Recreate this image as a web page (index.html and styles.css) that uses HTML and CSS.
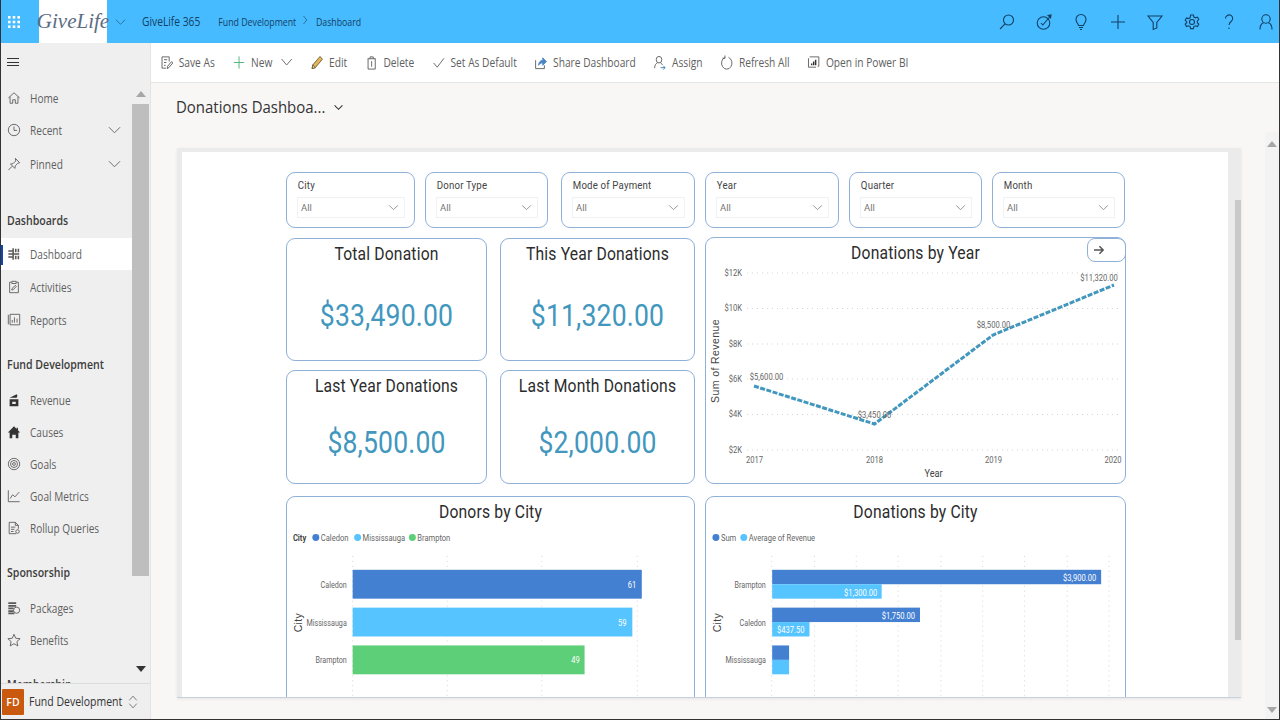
FILE: index.html
```html
<!DOCTYPE html>
<html lang="en">
<head>
<meta charset="utf-8">
<title>Donations Dashboard</title>
<link rel="stylesheet" href="styles.css">
</head>
<body>
<div class="app">
  <header class="topbar">
    <svg class="waffle" viewBox="0 0 14 14"><g fill="#fff"><rect x="1" y="1" width="2.6" height="2.6"/><rect x="5.7" y="1" width="2.6" height="2.6"/><rect x="10.4" y="1" width="2.6" height="2.6"/><rect x="1" y="5.7" width="2.6" height="2.6"/><rect x="5.7" y="5.7" width="2.6" height="2.6"/><rect x="10.4" y="5.7" width="2.6" height="2.6"/><rect x="1" y="10.4" width="2.6" height="2.6"/><rect x="5.7" y="10.4" width="2.6" height="2.6"/><rect x="10.4" y="10.4" width="2.6" height="2.6"/></g></svg>
    <div class="logo">GiveLife</div>
    <svg class="top-chev" viewBox="0 0 12 8"><path d="M1 1.5l5 5 5-5"/></svg>
    <div class="crumbs">
      <span class="app-name">GiveLife 365</span>
      <span class="crumb">Fund Development</span>
      <svg class="crumb-sep" viewBox="0 0 6 10"><path d="M1 1l4 4-4 4"/></svg>
      <span class="crumb">Dashboard</span>
    </div>
    <div class="top-icons">
      <svg viewBox="0 0 18 18"><circle cx="10.5" cy="7" r="5"/><path d="M7 10.8L2 16"/></svg>
      <svg viewBox="0 0 18 18"><circle cx="8.5" cy="10" r="6.3"/><path d="M6 10l1.8 2L15.5 3"/><path d="M12.5 2.5l3.5-.5-.5 3.5" fill="#123f63"/></svg>
      <svg viewBox="0 0 18 18"><path d="M6.5 12.5C6 10 4 9.5 4 6.5a5 5 0 0 1 10 0c0 3-2 3.5-2.5 6z"/><path d="M6.7 12.5h4.6M7 14.5h4M8 16.5h2"/></svg>
      <svg viewBox="0 0 18 18"><path d="M9 2v14M2 9h14"/></svg>
      <svg viewBox="0 0 18 18"><path d="M2 3h14l-5.2 6.5V15l-3.6 1.5v-7z"/></svg>
      <svg viewBox="0 0 18 18"><path d="M7.6 2h2.8l.5 2 1.6.8 2-.7 1.3 2.4-1.5 1.4v1.8l1.5 1.4-1.3 2.4-2-.7-1.6.8-.5 2H7.6l-.5-2-1.6-.8-2 .7-1.3-2.4 1.5-1.4V8.7L2.200 7.300l1.300-2.400 2 .7 1.600-.8z"/><circle cx="9" cy="9" r="2.500"/></svg>
      <svg viewBox="0 0 18 18"><path d="M5.500 5.500a3.600 3.600 0 1 1 5.600 3c-1.400 1-2 1.700-2 3.500"/><path d="M9 14.500v1.500"/></svg>
      <svg viewBox="0 0 18 18"><circle cx="9" cy="6" r="4.200"/><path d="M3 16.500c0-3.500 1.500-6 3.500-6.800M15 16.500c0-3.500-1.500-6-3.500-6.800"/></svg>
    </div>
  </header>

  <div class="body">
    <aside class="side">
      <div class="hamburger"><span></span><span></span><span></span></div>
      <div class="side-body">
        <nav class="nav">
          <a class="item"><svg class="ic" viewBox="0 0 16 16"><path d="M1.500 8L8 2l6.500 6M3.500 6.500V14h3v-4h3v4h3V6.500"/></svg><span class="lbl">Home</span></a>
          <a class="item"><svg class="ic" viewBox="0 0 16 16"><circle cx="8" cy="8" r="6.500"/><path d="M8 4v4.500h3.500"/></svg><span class="lbl">Recent</span><svg class="chev" viewBox="0 0 14 8"><path d="M1 1l6 6 6-6"/></svg></a>
          <a class="item gap-top"><svg class="ic" viewBox="0 0 16 16"><path d="M9.500 1.500l5 5-2 .5-3 3-.5 3L4 8l3-.5 3-3zM6 10.500L1.500 15"/></svg><span class="lbl">Pinned</span><svg class="chev" viewBox="0 0 14 8"><path d="M1 1l6 6 6-6"/></svg></a>
          <div class="group first"><span>Dashboards</span></div>
          <a class="item active"><svg class="ic" viewBox="0 0 16 16"><path d="M7 1.500v13M1.500 4.500H7M1.500 8H14M1.500 11.500H7M10 2v4M13 2v4M10 10v4M13 10v4" stroke-width="1.800"/></svg><span class="lbl">Dashboard</span></a>
          <a class="item tight"><svg class="ic" viewBox="0 0 16 16"><path d="M5 2.500H3v12h10v-12h-2M5.500 1.500h5v2.500h-5zM5.500 11.500L6 9.500l3.500-3.500 1.200 1.200L7.200 11z"/></svg><span class="lbl">Activities</span></a>
          <a class="item tight"><svg class="ic" viewBox="0 0 16 16"><path d="M3.500 1.500h11v12h-11zM1.500 2v11M6 11V8M8.500 11V5M11.500 11V6.500" /></svg><span class="lbl">Reports</span></a>
          <div class="group"><span>Fund Development</span></div>
          <a class="item"><svg class="ic solid" viewBox="0 0 16 16"><path d="M3 7h10v8H3zM6 10v2.500h4V10zM3 5.500l8-4 1 1.500-1 2.500z"/></svg><span class="lbl">Revenue</span></a>
          <a class="item"><svg class="ic solid" viewBox="0 0 16 16"><path d="M8 1.500l3 3V3h1.500v3L15 8.500h-2V15h-3v-4H6v4H3V8.500H1z"/></svg><span class="lbl">Causes</span></a>
          <a class="item"><svg class="ic" viewBox="0 0 16 16"><circle cx="8" cy="8" r="6.500"/><circle cx="8" cy="8" r="4"/><circle cx="8" cy="8" r="1.600"/></svg><span class="lbl">Goals</span></a>
          <a class="item"><svg class="ic" viewBox="0 0 16 16"><path d="M1.500 1.500v13h13M3.500 11l3-4.500 2.500 2.500 5-5.500"/></svg><span class="lbl">Goal Metrics</span></a>
          <a class="item"><svg class="ic" viewBox="0 0 16 16"><path d="M9.500 1.500h-7v13h8M9.500 1.500l3.500 3.500v4M9.500 1.500V5H13M4.500 7h5M4.500 9.500h4M4.500 12h3"/><circle cx="12" cy="12" r="2"/></svg><span class="lbl">Rollup Queries</span></a>
          <div class="group"><span>Sponsorship</span></div>
          <a class="item"><svg class="ic" viewBox="0 0 16 16"><path d="M1.500 2.500h9M1.500 5.500h9M1.500 8.500h6M1.500 11.500h6M1.500 14h7" stroke-width="2"/><circle cx="11" cy="10.500" r="3.500"/></svg><span class="lbl">Packages</span></a>
          <a class="item"><svg class="ic" viewBox="0 0 16 16"><path d="M8 1.500l2 4.500 5 .5-3.700 3.300 1.100 5L8 12.200l-4.400 2.600 1.100-5L1 6.500 6 6z"/></svg><span class="lbl">Benefits</span></a>
          <div class="group"><span>Membership</span></div>
        </nav>
        <div class="scrollbar">
          <span class="arrow up"></span>
          <span class="thumb"></span>
          <span class="arrow down"></span>
        </div>
      </div>
      <div class="switcher">
        <span class="tile">FD</span>
        <span class="sw-name">Fund Development</span>
        <svg class="updown" viewBox="0 0 12 18"><path d="M1.500 7L6 2l4.500 5M1.500 11L6 16l4.500-5"/></svg>
      </div>
    </aside>

    <main class="main">
      <div class="toolbar">
        <div class="tools">
          <a class="tool"><svg class="ic" viewBox="0 0 16 16"><path d="M7 14H2V2h9v5M4.500 5h4M4.500 8h3M4.500 11h2M8.500 14.500l.5-2.500 5-5 1.500 1.500-5 5z"/></svg>Save As</a>
          <a class="tool"><svg class="ic plus" viewBox="0 0 16 16"><path d="M8 1.500v13M1.500 8h13"/></svg>New<svg class="tool-chev" viewBox="0 0 14 8"><path d="M1 1l6 6 6-6"/></svg></a>
          <a class="tool"><svg class="ic pencil" viewBox="0 0 16 16"><path d="M1.500 14.500l1-4L11.500 1.500l3 3-9 9z"/><path class="tip" d="M1.500 14.500l1-4 3 3z"/></svg>Edit</a>
          <a class="tool"><svg class="ic" viewBox="0 0 16 16"><path d="M3 4h10M6 4V2h4v2M3.500 4v11h9V4M8 6.500v6"/></svg>Delete</a>
          <a class="tool"><svg class="ic" viewBox="0 0 16 16"><path d="M1.500 8.500L6 13l8.500-9.500"/></svg>Set As Default</a>
          <a class="tool"><svg class="ic share" viewBox="0 0 16 16"><path d="M1.500 5.500v9h11V11"/><path class="fill" d="M5 11c.5-3.500 3-5.500 5.500-5.500V3l4.500 4-4.500 4V8.500C8.500 8.500 6.500 9 5 11z"/></svg>Share Dashboard</a>
          <a class="tool"><svg class="ic" viewBox="0 0 16 16"><circle cx="7" cy="5" r="3.500"/><path d="M1.500 14c0-3 1.500-5 3.500-5.500M9 8.500c1 .3 1.800 1 2.300 2"/><path class="blue" d="M9 13.500h5.500M12.500 11.500l2 2-2 2"/></svg>Assign</a>
          <a class="tool"><svg class="ic" viewBox="0 0 16 16"><path d="M10 2.500a6.500 6.500 0 1 1-4.500 0M5.500 .5v3h-3"/></svg>Refresh All</a>
          <a class="tool"><svg class="ic" viewBox="0 0 16 16"><path d="M3 2h11.500v10H13M1.500 3.500V13H11"/><path class="bars" d="M5.500 11V9M8 11V7M10.500 11V5" stroke-width="1.800"/></svg>Open in Power BI</a>
        </div>
      </div>

      <div class="title-row">
        <h1>Donations Dashboa...</h1>
        <svg class="title-chev" viewBox="0 0 12 8"><path d="M1.500 1.500L6 6l4.500-4.500"/></svg>
      </div>

      <section class="frame">
        <div class="canvas">
          <div class="filters">
            <div class="slicer s1"><label>City</label><div class="drop">All<svg viewBox="0 0 12 8"><path d="M1 1.500l5 5 5-5"/></svg></div></div>
            <div class="slicer s2"><label>Donor Type</label><div class="drop">All<svg viewBox="0 0 12 8"><path d="M1 1.500l5 5 5-5"/></svg></div></div>
            <div class="slicer s3"><label>Mode of Payment</label><div class="drop">All<svg viewBox="0 0 12 8"><path d="M1 1.500l5 5 5-5"/></svg></div></div>
            <div class="slicer s3"><label>Year</label><div class="drop">All<svg viewBox="0 0 12 8"><path d="M1 1.500l5 5 5-5"/></svg></div></div>
            <div class="slicer s4"><label>Quarter</label><div class="drop">All<svg viewBox="0 0 12 8"><path d="M1 1.500l5 5 5-5"/></svg></div></div>
            <div class="slicer s4"><label>Month</label><div class="drop">All<svg viewBox="0 0 12 8"><path d="M1 1.500l5 5 5-5"/></svg></div></div>
          </div>

          <div class="board">
            <div class="card kpi k1"><h2>Total Donation</h2><div class="value">$33,490.00</div></div>
            <div class="card kpi k2"><h2>This Year Donations</h2><div class="value">$11,320.00</div></div>
            <div class="card kpi k3"><h2>Last Year Donations</h2><div class="value">$8,500.00</div></div>
            <div class="card kpi k4"><h2>Last Month Donations</h2><div class="value">$2,000.00</div></div>

            <div class="card chart line-card">
              <h2>Donations by Year</h2>
              <button class="next"><svg viewBox="0 0 14 12"><path d="M1 6h11M7.500 1.500L12 6l-4.500 4.500"/></svg></button>
              <svg class="plot" viewBox="706 268 419 215">
                <g class="grid"><path d="M747 273H1122M747 308.500H1122M747 344H1122M747 379H1122M747 414.500H1122M747 450H1122"/></g>
                <g class="tick end"><text x="742" y="276">$12K</text><text x="742" y="311.500">$10K</text><text x="742" y="347">$8K</text><text x="742" y="382">$6K</text><text x="742" y="417.500">$4K</text><text x="742" y="453">$2K</text></g>
                <g class="tick mid"><text x="754.500" y="463">2017</text><text x="874.500" y="463">2018</text><text x="993.500" y="463">2019</text><text x="1113" y="463">2020</text></g>
                <text class="axis mid" x="933.500" y="477">Year</text>
                <text class="axis-r mid" transform="translate(719 361) rotate(-90)">Sum of Revenue</text>
                <polyline class="trend" points="754,386 874.500,424 993,335 1114,285"/>
                <g class="tick mid"><text x="766.500" y="380">$5,600.00</text><text x="874.500" y="418">$3,450.00</text><text x="993.500" y="328">$8,500.00</text><text x="1099" y="281">$11,320.00</text></g>
              </svg>
            </div>

            <div class="card chart city1">
              <h2>Donors by City</h2>
              <svg class="plot" viewBox="287 527 407 215">
                <g class="legend"><text class="lb" x="292" y="541">City</text><circle class="c1" cx="315" cy="537.500" r="3.500"/><text x="320" y="541">Caledon</text><circle class="c2" cx="357" cy="537.500" r="3.500"/><text x="362" y="541">Mississauga</text><circle class="c3" cx="412" cy="537.500" r="3.500"/><text x="417" y="541">Brampton</text></g>
                <g class="grid"><path d="M352 556V697M447 556V697M542 556V697M638 556V697"/></g>
                <g class="tick end cat"><text x="346" y="588">Caledon</text><text x="346" y="626">Mississauga</text><text x="346" y="664">Brampton</text></g>
                <text class="axis-r mid" transform="translate(301 623) rotate(-90)">City</text>
                <rect class="c1" x="352" y="570" width="290.500" height="29"/>
                <rect class="c2" x="352" y="608" width="281" height="29"/>
                <rect class="c3" x="352" y="646" width="233" height="29"/>
                <g class="lab end"><text x="637" y="588">61</text><text x="627" y="626">59</text><text x="580" y="664">49</text></g>
              </svg>
            </div>

            <div class="card chart city2">
              <h2>Donations by City</h2>
              <svg class="plot" viewBox="706 527 419 215">
                <g class="legend"><circle class="c1" cx="715" cy="537.500" r="3.500"/><text x="720" y="541">Sum</text><circle class="c2" cx="743" cy="537.500" r="3.500"/><text x="748" y="541">Average of Revenue</text></g>
                <g class="grid"><path d="M771 556V697M814 556V697M856 556V697M898 556V697M941 556V697M983 556V697M1025 556V697M1068 556V697M1110 556V697"/></g>
                <g class="tick end cat"><text x="765" y="588">Brampton</text><text x="765" y="626">Caledon</text><text x="765" y="664">Mississauga</text></g>
                <text class="axis-r mid" transform="translate(720 623) rotate(-90)">City</text>
                <rect class="c1" x="771.500" y="570" width="330.500" height="14.500"/>
                <rect class="c2" x="771.500" y="584.500" width="110" height="14.500"/>
                <rect class="c1" x="771.500" y="608" width="148.500" height="14.500"/>
                <rect class="c2" x="771.500" y="622.500" width="37.500" height="14.500"/>
                <rect class="c1" x="771.500" y="646" width="17" height="14.500"/>
                <rect class="c2" x="771.500" y="660.500" width="17" height="14.500"/>
                <g class="lab end"><text x="1097" y="581">$3,900.00</text><text x="877" y="596">$1,300.00</text><text x="915" y="619">$1,750.00</text><text x="804" y="634">$437.50</text></g>
              </svg>
            </div>
          </div>
        </div>
        <div class="frame-scroll"><span></span></div>
      </section>

      <div class="main-scroll"><span class="arrow up"></span><span class="arrow down"></span></div>
    </main>
  </div>
</div>
</body>
</html>
```
FILE: styles.css
```css
* { box-sizing: border-box; }
html, body { margin: 0; height: 100%; overflow: hidden; }
body { font-family: "Open Sans", "Noto Sans", sans-serif; color: #333; }
a { display: flex; align-items: center; }
svg { display: block; fill: none; }

.app { width: 1280px; height: 720px; display: flex; flex-direction: column; border: solid #333; border-width: 0 1px 1px 1px; overflow: hidden; }

/* top bar */
.topbar { flex: 0 0 43px; background: #47bbff; display: flex; align-items: center; color: #123f63; font-size: 12px; }
.waffle { width: 14px; height: 14px; margin-left: 6px; }
.logo { width: 68px; height: 43px; margin-left: 18px; background: #fff; display: flex; align-items: center; justify-content: center; font: italic 21px "Liberation Serif", serif; color: #5c6c84; }
.top-chev { width: 11px; height: 8px; margin: 0 16px 0 8px; stroke: #2a6a96; flex: none; }
.crumbs { display: flex; align-items: center; transform: scaleX(.82); transform-origin: 0 50%; white-space: nowrap; }
.app-name { font-size: 12.500px; margin-right: 22px; }
.crumb { font-size: 10.700px; }
.crumb-sep { width: 6px; height: 10px; margin: 0 10px 3px 8px; stroke: #2a6a96; }
.top-icons { margin-left: auto; margin-right: 4px; display: flex; gap: 19px; }
.top-icons svg { width: 18px; height: 18px; stroke: #123f63; stroke-width: 1.100; }

.body { flex: 1; display: flex; min-height: 0; }

/* side nav */
.side { flex: 0 0 150px; background: #efefef; display: flex; flex-direction: column; border-right: 1px solid #e4e4e4; }
.hamburger { flex: 0 0 39px; padding: 15px 0 0 6px; }
.hamburger span { display: block; width: 12px; height: 1px; background: #333; margin-bottom: 2.500px; }
.side-body { flex: 1; display: flex; min-height: 0; overflow: hidden; }
.nav { flex: 0 0 131px; }
.item { height: 32px; padding-left: 6px; font-size: 12px; color: #5f5f5f; }
.lbl { display: inline-block; transform: scaleX(.84); transform-origin: 0 50%; white-space: nowrap; }
.ic { width: 14px; height: 14px; stroke: #5a5a5a; stroke-width: 1; margin-right: 9px; flex: none; }
.ic.solid { fill: #333; stroke: none; }
.chev { width: 13px; height: 8px; stroke: #666; margin-left: auto; margin-right: 11px; flex: none; }
.gap-top { margin-top: 2px; }
.group { height: 32px; display: flex; align-items: center; padding-left: 6px; margin: 12px 0 4px; font-size: 12px; font-weight: 600; color: #3c3c3c; }
.group span { display: inline-block; transform: scaleX(.88); transform-origin: 0 50%; white-space: nowrap; }
.group.first { margin: 24px 0 2px; }
.active { background: #fff; position: relative; margin-bottom: 1px; }
.active::before { content: ""; position: absolute; left: 0; top: 7px; width: 2px; height: 20px; background: #1146b5; }
.tight { margin-bottom: 1px; }
.scrollbar { flex: 0 0 17px; display: flex; flex-direction: column; align-items: center; }
.scrollbar .thumb { width: 17px; height: 472px; background: #bebebe; }
.arrow { width: 0; height: 0; border: 5px solid transparent; }
.arrow.up { border-top: 0; border-bottom: 6px solid #a6a6a6; }
.arrow.down { border-bottom: 0; border-top: 6px solid #333; }
.scrollbar .arrow.up { margin: 9px 0 7px; }
.scrollbar .arrow.down { margin-top: 90px; }
.switcher { flex: 0 0 36px; border-top: 1px solid #dcdcdc; display: flex; align-items: center; padding-left: 1px; background: #efefef; position: relative; }
.tile { width: 22px; height: 26px; background: #c9590f; color: #fff; font-size: 10.500px; font-weight: 600; display: flex; align-items: center; justify-content: center; border-radius: 1px; margin-right: 5px; flex: none; }
.sw-name { font-size: 12.500px; color: #333; white-space: nowrap; transform: scaleX(.84); transform-origin: 0 50%; }
.updown { width: 10px; height: 16px; position: absolute; left: 127px; stroke: #666; }

/* main */
.main { flex: 1; min-width: 0; background: #f8f7f6; position: relative; display: flex; flex-direction: column; }
.toolbar { flex: 0 0 39.500px; background: #fff; border-bottom: 1px solid #e6e6e6; padding-left: 9px; display: flex; align-items: center; }
.tools { display: flex; align-items: center; gap: 20.700px; transform: scaleX(.85); transform-origin: 0 50%; white-space: nowrap; }
.tool { font-size: 12px; color: #606060; }
.tool .ic { margin-right: 6px; width: 16px; height: 15px; stroke: #555; }
.tool .ic.plus { stroke: #3fae6b; }
.tool .ic.pencil { stroke: #6d5a2c; fill: #e2b65c; }
.pencil .tip { fill: #f2dfb4; }
.share .fill { fill: #4a86c5; stroke: #4a86c5; }
.ic .blue { stroke: #2f75b5; }
.ic .bars { stroke: #333; }
.tool-chev { width: 14px; height: 8px; stroke: #666; margin-left: 10px; }

.title-row { flex: 0 0 65.500px; display: flex; align-items: flex-start; padding: 12px 0 0 25px; }
h1 { margin: 0; font-size: 17px; line-height: 23px; font-weight: 400; color: #333; white-space: nowrap; transform: scaleX(.88); transform-origin: 0 50%; width: 151px; }
.title-chev { width: 11px; height: 7px; margin: 9px 0 0 6px; stroke: #333; stroke-width: 1.200; }

.frame { flex: 0 0 550px; margin-left: 26px; width: 1064px; display: flex; background: #ebebeb; padding: 4px 0 0 5px; border-bottom: 1px solid #c6d2df; box-shadow: 0 1px 3px rgba(0,0,0,.08); overflow: hidden; }
.canvas { flex: 0 0 1046px; background: #fff; padding: 20px 0 0 104px; overflow: hidden; }
.frame-scroll { flex: 1; padding: 48px 0 0 7px; }
.frame-scroll span { display: block; width: 6px; height: 440px; background: #c9c9c9; }

.main-scroll { position: absolute; right: 0; top: 89px; bottom: 0; width: 14px; background: #f3f3f3; display: flex; flex-direction: column; align-items: center; justify-content: space-between; padding: 9px 0 6px; }
.main-scroll .arrow.down { border-top-color: #a6a6a6; }

/* dashboard */
.card, .slicer { border: 1px solid #8fb0d8; border-radius: 9px; background: #fff; }
.filters { display: flex; gap: 10px; height: 56px; font-family: Roboto, sans-serif; }
.slicer { padding: 5px 9px 0 10px; }
.s1 { width: 129px; }
.s2 { width: 123px; margin-right: 3px; }
.s3 { width: 134px; }
.s4 { width: 133px; }
.slicer label { display: block; font-size: 11.500px; line-height: 14px; color: #444; padding-left: 1px; transform: scaleX(.84); transform-origin: 0 50%; white-space: nowrap; letter-spacing: .2px; }
.drop { margin-top: 5px; height: 21px; border: 1px solid #f1f1f1; display: flex; align-items: center; justify-content: space-between; padding: 0 5px 0 3px; font-size: 9.500px; color: #777; }
.drop svg { width: 11px; height: 7px; stroke: #8a8a8a; }

.board { display: grid; grid-template-columns: 201px 13px 195px 10px 421px; grid-template-rows: 123px 9px 114px 8px 250px; margin-top: 10px; width: 840px; font-family: Roboto, sans-serif; }
.board > .card { display: flex; flex-direction: column; }
.k1 { grid-area: 1 / 1; }
.k2 { grid-area: 1 / 3; }
.k3 { grid-area: 3 / 1; }
.k4 { grid-area: 3 / 3; }
.board .line-card { grid-area: 1 / 5 / 4 / 6; margin-top: -1px; position: relative; }
.board .city1 { grid-area: 5 / 1 / 6 / 4; margin-top: 4px; }
.board .city2 { grid-area: 5 / 5; margin-top: 4px; }
h2 { margin: 0; height: 30px; padding-bottom: 2px; display: flex; align-items: center; justify-content: center; font-size: 19px; font-weight: 400; color: #2c2c2c; white-space: nowrap; flex: none; transform: scaleX(.825); letter-spacing: .2px; }
.value { flex: 1; display: flex; align-items: center; justify-content: center; font-size: 32px; color: #4197bd; transform: scaleX(.83); letter-spacing: .2px; white-space: nowrap; }
.plot { flex: 1; width: 100%; min-height: 0; }
.grid path { stroke: #d5d5d5; stroke-width: 1; stroke-dasharray: 1 4; }
.tick { font-size: 9.500px; fill: #666; }
.tick text, .lab text, .legend text, .axis { transform-box: fill-box; transform: scaleX(.8); }
.tick.cat text { transform: scaleX(.76); }
.tick.mid text, .axis { transform-origin: 50% 50%; }
.tick.end text, .lab text { transform-origin: 100% 50%; }
.legend text { transform-origin: 0 50%; transform: scaleX(.8); }
.end { text-anchor: end; }
.mid { text-anchor: middle; }
.axis { font-size: 11.500px; fill: #444; }
.axis-r { font-size: 10.500px; fill: #444; letter-spacing: .4px; font-family: "Liberation Sans", sans-serif; }
.trend { fill: none; stroke: #4197bd; stroke-width: 3; stroke-dasharray: 5 1.500; }
.next { position: absolute; right: -1px; top: 0; width: 39px; height: 24px; background: #fff; border: 1px solid #8fb0d8; border-radius: 8px; padding: 0 0 0 5px; }
.next svg { width: 12px; height: 10px; stroke: #555; stroke-width: 1.800; }
.legend { font-size: 9.500px; fill: #666; }
.legend .lb { font-weight: 700; fill: #444; }
.c1 { fill: #4480d2; }
.c2 { fill: #56c4fe; }
.c3 { fill: #5ccf78; }
.lab { font-size: 9.500px; fill: #fff; }
```
